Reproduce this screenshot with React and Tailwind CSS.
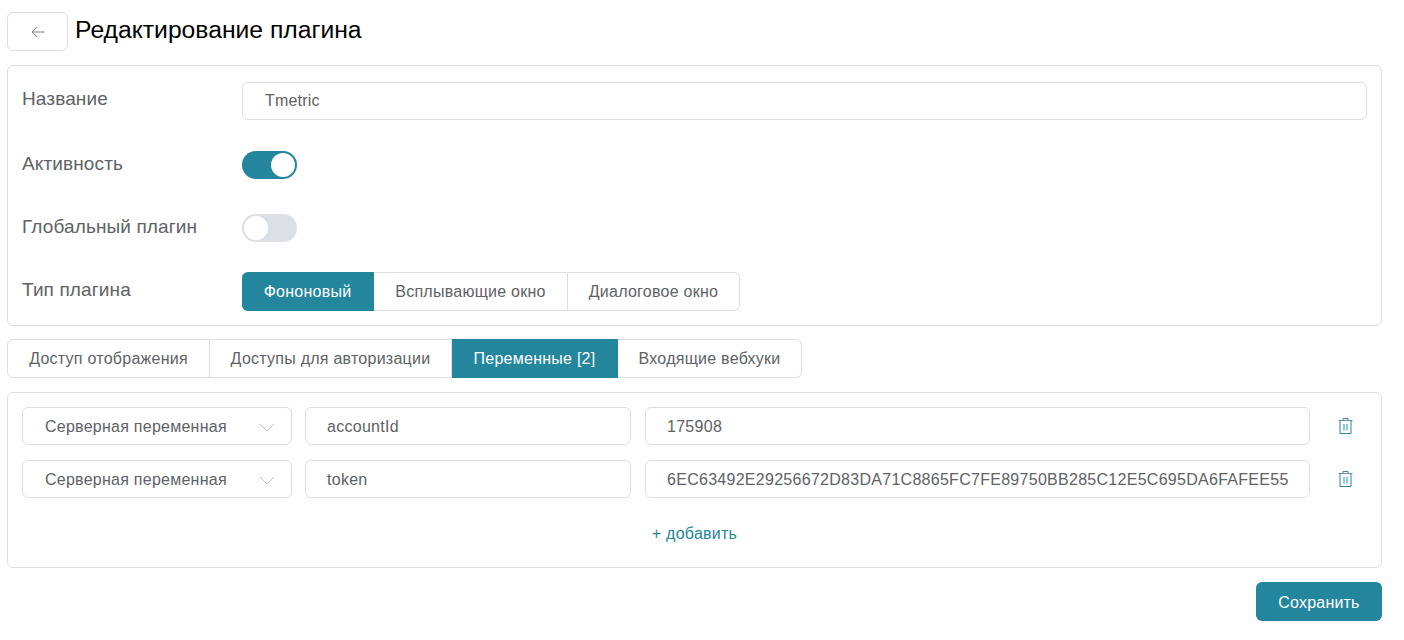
import React from "react";

const Chevron = () => (
  <svg width="16" height="9" viewBox="0 0 16 9" fill="none" className="shrink-0">
    <path d="M1 1l7 7 7-7" stroke="#bcc2cf" strokeWidth="1" />
  </svg>
);

const Trash = () => (
  <svg width="15" height="16" viewBox="0 0 15 16" fill="none" className="shrink-0">
    <path d="M0.5 2.5h14" stroke="#6f90a6" strokeWidth="1" />
    <path d="M5 2.5V0.5h5v2" stroke="#56788c" strokeWidth="1" />
    <path d="M2 2.5V15.5h11V2.5" stroke="#2f8298" strokeWidth="1" />
    <path d="M6 6v6.5M9 6v6.5" stroke="#2391b0" strokeWidth="1" />
  </svg>
);

const Toggle = ({ on }) => (
  <div className={`w-[55px] h-[28px] rounded-full flex items-center px-[2px] ${on ? "bg-[#23869c] justify-end" : "bg-[#dcdfe6] justify-start"}`}>
    <div className="w-[24px] h-[24px] rounded-full bg-white" />
  </div>
);

const Row = ({ label, children, className, labelClass }) => (
  <div className={`flex ${className}`}>
    <div className={`w-[219px] shrink-0 -ml-[1px] pr-[0px] mr-[1px] text-[#606266] text-[19px] tracking-[0.12px] leading-[24px] ${labelClass}`}>{label}</div>
    {children}
  </div>
);

const Segment = ({ children, active, className }) => (
  <div className={`h-full flex items-center justify-center border-y border-r text-[16px] tracking-[0.25px] ${active ? "bg-[#23869c] border-[#23869c] text-white" : "border-[#dcdfe6] bg-white text-[#606266]"} ${className}`}>
    {children}
  </div>
);

const Field = ({ children, className }) => (
  <div className={`h-[38px] border border-[#dcdfe6] rounded-[6px] pl-[21px] pr-[21px] pt-[2px] flex items-center text-[16px] tracking-[0.28px] text-[#606266] whitespace-nowrap overflow-hidden bg-white ${className}`}>
    <span className="overflow-hidden">{children}</span>
  </div>
);

const VarRow = ({ name, value, className }) => (
  <div className={`flex items-center ${className}`}>
    <div className="w-[270px] h-[38px] border border-[#dcdfe6] rounded-[6px] pl-[22px] pr-[16px] pt-[2px] flex items-center justify-between text-[16px] tracking-[0.25px] text-[#606266] whitespace-nowrap shrink-0">
      <span>Серверная переменная</span>
      <Chevron />
    </div>
    <Field className="w-[326px] ml-[13px] shrink-0">{name}</Field>
    <Field className="w-[665px] ml-[14px] shrink-0">{value}</Field>
    <div className="ml-[28px]"><Trash /></div>
  </div>
);

export default function App() {
  return (
    <div className="bg-white min-h-[640px] pl-[7px] pr-[22px] pt-[12px] font-['Liberation_Sans',Arial,sans-serif]">
      <div className="flex items-start">
        <div className="w-[61px] h-[39px] border border-[#dcdfe6] rounded-[6px] flex items-center justify-center">
          <svg width="14" height="12" viewBox="0 0 14 12" fill="none">
            <path d="M13.5 6H1M6 1L1 6l5 5" stroke="#7b8088" strokeWidth="1" />
          </svg>
        </div>
        <h1 className="ml-[7px] text-[24.7px] leading-[36px] text-black">Редактирование плагина</h1>
      </div>

      <div className="mt-[14px] h-[261px] border border-[#dcdfe6] rounded-[6px] pl-[15px] pr-[14px] pt-[16px]">
        <Row label="Название" labelClass="pt-[5px]" className="h-[38px]">
          <div className="flex-1 h-[38px] border border-[#dcdfe6] rounded-[6px] pl-[22px] flex items-center text-[16px] tracking-[0.2px] text-[#606266]">Tmetric</div>
        </Row>
        <Row label="Активность" labelClass="pt-[1px]" className="mt-[31px] h-[28px]"><Toggle on /></Row>
        <Row label="Глобальный плагин" labelClass="pt-[1px]" className="mt-[35px] h-[28px]"><Toggle /></Row>
        <Row label="Тип плагина" labelClass="pt-[6px]" className="mt-[30px] h-[39px]">
          <div className="flex h-[39px]">
            <Segment active className="w-[132px] rounded-l-[6px]">Фононовый</Segment>
            <Segment className="w-[194px]">Всплывающие окно</Segment>
            <Segment className="w-[172px] rounded-r-[6px]">Диалоговое окно</Segment>
          </div>
        </Row>
      </div>

      <div className="flex h-[39px] mt-[13px]">
        <Segment className="w-[203px] border-l rounded-l-[6px]">Доступ отображения</Segment>
        <Segment className="w-[242px]">Доступы для авторизации</Segment>
        <Segment active className="w-[166px]">Переменные [2]</Segment>
        <Segment className="w-[184px] rounded-r-[6px]">Входящие вебхуки</Segment>
      </div>

      <div className="mt-[14px] h-[176px] border border-[#dcdfe6] rounded-[6px] px-[14px] pt-[14px]">
        <VarRow name="accountId" value="175908" />
        <VarRow name="token" value="6EC63492E29256672D83DA71C8865FC7FE89750BB285C12E5C695DA6FAFEE55" className="mt-[15px]" />
        <div className="mt-[25px] text-center text-[16px] tracking-[0.25px] leading-[22px] text-[#23869c]">+ добавить</div>
      </div>

      <div className="flex justify-end mt-[14px]">
        <div className="w-[126px] h-[39px] pt-[2px] rounded-[6px] bg-[#23869c] text-white text-[16px] tracking-[0.2px] flex items-center justify-center">Сохранить</div>
      </div>
    </div>
  );
}
